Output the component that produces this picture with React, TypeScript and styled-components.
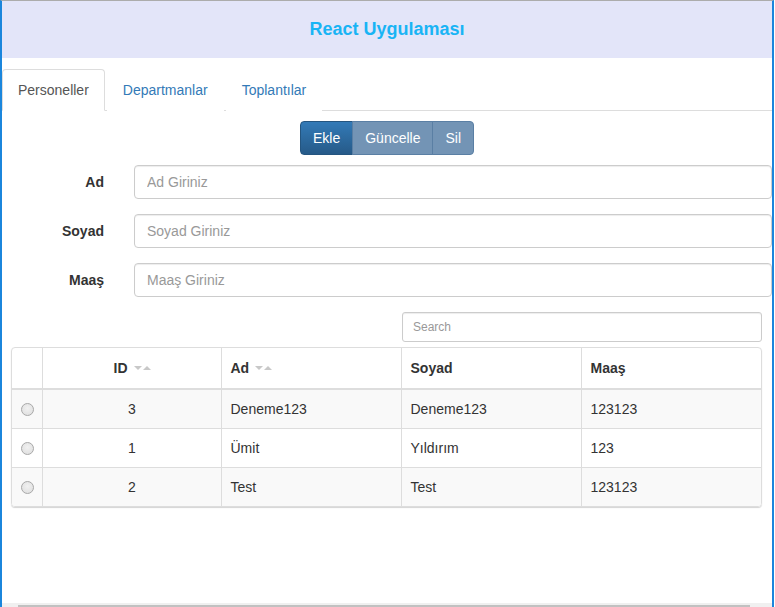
import React from "react";
import styled, { createGlobalStyle } from "styled-components";

const GlobalStyle = createGlobalStyle`
  html, body {
    margin: 0;
    padding: 0;
    overflow: hidden;
    background: #fff;
  }
  body {
    font-family: "Liberation Sans", Arial, sans-serif;
    font-size: 14px;
    color: #333;
  }
  * {
    box-sizing: border-box;
  }
`;

type Personel = {
  id: number;
  ad: string;
  soyad: string;
  maas: string;
};

const personeller: Personel[] = [
  { id: 3, ad: "Deneme123", soyad: "Deneme123", maas: "123123" },
  { id: 1, ad: "Ümit", soyad: "Yıldırım", maas: "123" },
  { id: 2, ad: "Test", soyad: "Test", maas: "123123" },
];

const fields = [
  { label: "Ad", placeholder: "Ad Giriniz" },
  { label: "Soyad", placeholder: "Soyad Giriniz" },
  { label: "Maaş", placeholder: "Maaş Giriniz" },
];

export default function App() {
  return (
    <>
      <GlobalStyle />
      <Frame>
        <Content>
          <Header>
            <Title>React Uygulaması</Title>
          </Header>

          <Tabs>
            <Tab $active>Personeller</Tab>
            <Tab>Departmanlar</Tab>
            <Tab>Toplantılar</Tab>
          </Tabs>

          <Toolbar>
            <BtnGroup>
              <ActionBtn $active>Ekle</ActionBtn>
              <ActionBtn>Güncelle</ActionBtn>
              <ActionBtn>Sil</ActionBtn>
            </BtnGroup>
          </Toolbar>

          <Form>
            {fields.map((f) => (
              <FormRow key={f.label}>
                <Label>{f.label}</Label>
                <Input placeholder={f.placeholder} />
              </FormRow>
            ))}
          </Form>

          <SearchRow>
            <Search placeholder="Search" />
          </SearchRow>

          <TableWrap>
            <Table>
              <thead>
                <tr>
                  <Th $w={30} />
                  <Th $w={179} $center>
                    ID
                    <Order>
                      <Caret $up={false} />
                      <Caret $up />
                    </Order>
                  </Th>
                  <Th $w={180}>
                    Ad
                    <Order>
                      <Caret $up={false} />
                      <Caret $up />
                    </Order>
                  </Th>
                  <Th $w={180}>Soyad</Th>
                  <Th $w={180}>Maaş</Th>
                </tr>
              </thead>
              <tbody>
                {personeller.map((p, i) => (
                  <Tr key={p.id} $striped={i % 2 === 0}>
                    <Td $center>
                      <Radio />
                    </Td>
                    <Td $center>{p.id}</Td>
                    <Td>{p.ad}</Td>
                    <Td>{p.soyad}</Td>
                    <Td>{p.maas}</Td>
                  </Tr>
                ))}
              </tbody>
            </Table>
          </TableWrap>
        </Content>

        <ScrollTrack>
          <ScrollThumb />
        </ScrollTrack>
      </Frame>
    </>
  );
}

const Frame = styled.div`
  width: 774px;
  height: 607px;
  display: flex;
  flex-direction: column;
  border-top: 1px solid #acacac;
  border-left: 2px solid #1b86dc;
  border-right: 2px solid #1b86dc;
`;

const Content = styled.div`
  flex: 1;
  overflow: hidden;
`;

const Header = styled.div`
  height: 57px;
  background: #e3e5f9;
  display: flex;
  align-items: center;
  justify-content: center;
`;

const Title = styled.h1`
  margin: 0;
  font-size: 18px;
  font-weight: bold;
  color: #19b4f5;
`;

const Tabs = styled.ul`
  margin: 11px 0 0;
  padding: 0;
  list-style: none;
  display: flex;
  border-bottom: 1px solid #ddd;
`;

const Tab = styled.li<{ $active?: boolean }>`
  margin-right: 2px;
  margin-bottom: -1px;
  padding: 10px 15px;
  line-height: 20px;
  font-size: 14px;
  border: 1px solid ${(p) => (p.$active ? "#ddd" : "transparent")};
  border-bottom-color: transparent;
  border-radius: 4px 4px 0 0;
  background: #fff;
  color: ${(p) => (p.$active ? "#555" : "#337ab7")};
  cursor: pointer;
`;

const Toolbar = styled.div`
  display: flex;
  justify-content: center;
  margin-top: 10px;
`;

const BtnGroup = styled.div`
  display: flex;
`;

const ActionBtn = styled.button<{ $active?: boolean }>`
  font-family: inherit;
  font-size: 14px;
  line-height: 20px;
  padding: 6px 12px;
  color: #fff;
  margin-left: -1px;
  border: 1px solid ${(p) => (p.$active ? "#245580" : "#5a7fa4")};
  background: ${(p) =>
    p.$active
      ? "linear-gradient(to bottom, #337ab7 0%, #265a88 100%)"
      : "#7394b5"};
  border-radius: 0;
  &:first-child {
    margin-left: 0;
    border-radius: 4px 0 0 4px;
  }
  &:last-child {
    border-radius: 0 4px 4px 0;
  }
`;

const Form = styled.div`
  margin-top: 10px;
  display: flex;
  flex-direction: column;
  gap: 15px;
`;

const FormRow = styled.div`
  display: flex;
  align-items: center;
  gap: 30px;
`;

const Label = styled.label`
  width: 102px;
  text-align: right;
  font-weight: bold;
  font-size: 14px;
`;

const Input = styled.input`
  flex: 1;
  height: 34px;
  padding: 6px 12px;
  font-family: inherit;
  font-size: 14px;
  color: #555;
  border: 1px solid #ccc;
  border-radius: 4px;
  box-shadow: inset 0 1px 1px rgba(0, 0, 0, 0.075);
  outline: none;
  &::placeholder {
    color: #999;
  }
`;

const SearchRow = styled.div`
  display: flex;
  justify-content: flex-end;
  margin-top: 15px;
  padding-right: 10px;
`;

const Search = styled.input`
  width: 360px;
  height: 30px;
  padding: 5px 10px;
  font-family: inherit;
  font-size: 12px;
  border: 1px solid #ccc;
  border-radius: 3px;
  box-shadow: inset 0 1px 1px rgba(0, 0, 0, 0.075);
  outline: none;
  &::placeholder {
    color: #999;
  }
`;

const TableWrap = styled.div`
  margin: 5px 10px 0 9px;
  border: 1px solid #ddd;
  border-radius: 4px;
  overflow: hidden;
  box-shadow: 0 1px 1px #d4d4d4;
`;

const Table = styled.table`
  width: 749px;
  table-layout: fixed;
  border-collapse: collapse;
  font-size: 14px;
`;

const Th = styled.th<{ $w: number; $center?: boolean }>`
  width: ${(p) => p.$w}px;
  padding: 10px 8px 10px 9px;
  line-height: 20px;
  text-align: ${(p) => (p.$center ? "center" : "left")};
  font-weight: bold;
  border-bottom: 2px solid #ddd;
  border-left: 1px solid #ddd;
  &:first-child {
    border-left: none;
  }
`;

const Order = styled.span`
  display: inline-flex;
  align-items: center;
  gap: 1px;
  margin-left: 6px;
  vertical-align: middle;
  position: relative;
  top: -1px;
`;

const Caret = styled.span<{ $up: boolean }>`
  width: 0;
  height: 0;
  border-left: 4px solid transparent;
  border-right: 4px solid transparent;
  ${(p) =>
    p.$up ? "border-bottom: 4px solid #c8c8c8;" : "border-top: 4px solid #c8c8c8;"}
`;

const Tr = styled.tr<{ $striped: boolean }>`
  background: ${(p) => (p.$striped ? "#f9f9f9" : "#fff")};
`;

const Td = styled.td<{ $center?: boolean }>`
  padding: 9px 8px 9px 9px;
  line-height: 20px;
  text-align: ${(p) => (p.$center ? "center" : "left")};
  border-top: 1px solid #ddd;
  border-left: 1px solid #ddd;
  &:first-child {
    border-left: none;
  }
`;

const Radio = styled.span`
  display: inline-block;
  width: 13px;
  height: 13px;
  border-radius: 50%;
  border: 1px solid #a9a9a9;
  background: radial-gradient(circle at 50% 40%, #f1f1f1 0%, #dcdcdc 100%);
  vertical-align: middle;
  position: relative;
  top: -1px;
`;

const ScrollTrack = styled.div`
  height: 4px;
  background: #f0f0f0;
  padding: 2px 22px 0 16px;
`;

const ScrollThumb = styled.div`
  height: 2px;
  background: #c1c1c1;
`;
